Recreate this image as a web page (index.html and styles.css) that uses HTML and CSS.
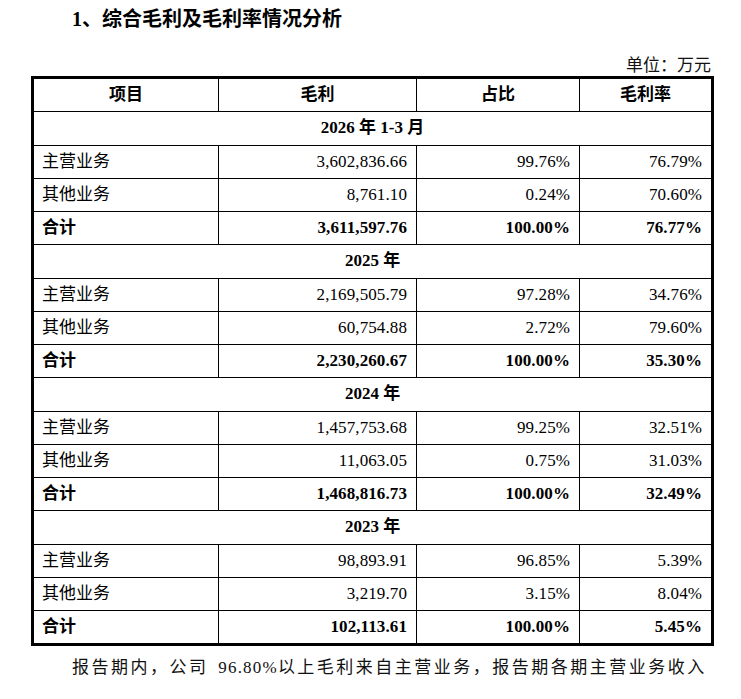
FILE: index.html
```html
<!DOCTYPE html>
<html lang="zh-CN">
<head>
<meta charset="utf-8">
<title>综合毛利及毛利率情况分析</title>
<link rel="stylesheet" href="styles.css">
</head>
<body>
<h2 class="title">1、综合毛利及毛利率情况分析</h2>
<div class="unit">单位：万元</div>
<table class="grid">
  <colgroup>
    <col class="c1"><col class="c2"><col class="c3"><col class="c4">
  </colgroup>
  <thead>
    <tr class="head"><td>项目</td><td>毛利</td><td>占比</td><td class="last">毛利率</td></tr>
  </thead>
  <tbody>
    <tr class="period"><td colspan="4" class="last">2026 年 1-3 月</td></tr>
    <tr><td class="name">主营业务</td><td class="num">3,602,836.66</td><td class="num">99.76%</td><td class="num last">76.79%</td></tr>
    <tr><td class="name">其他业务</td><td class="num">8,761.10</td><td class="num">0.24%</td><td class="num last">70.60%</td></tr>
    <tr class="total"><td class="name">合计</td><td class="num">3,611,597.76</td><td class="num">100.00%</td><td class="num last">76.77%</td></tr>

    <tr class="period"><td colspan="4" class="last">2025 年</td></tr>
    <tr><td class="name">主营业务</td><td class="num">2,169,505.79</td><td class="num">97.28%</td><td class="num last">34.76%</td></tr>
    <tr><td class="name">其他业务</td><td class="num">60,754.88</td><td class="num">2.72%</td><td class="num last">79.60%</td></tr>
    <tr class="total"><td class="name">合计</td><td class="num">2,230,260.67</td><td class="num">100.00%</td><td class="num last">35.30%</td></tr>

    <tr class="period"><td colspan="4" class="last">2024 年</td></tr>
    <tr><td class="name">主营业务</td><td class="num">1,457,753.68</td><td class="num">99.25%</td><td class="num last">32.51%</td></tr>
    <tr><td class="name">其他业务</td><td class="num">11,063.05</td><td class="num">0.75%</td><td class="num last">31.03%</td></tr>
    <tr class="total"><td class="name">合计</td><td class="num">1,468,816.73</td><td class="num">100.00%</td><td class="num last">32.49%</td></tr>

    <tr class="period"><td colspan="4" class="last">2023 年</td></tr>
    <tr><td class="name">主营业务</td><td class="num">98,893.91</td><td class="num">96.85%</td><td class="num last">5.39%</td></tr>
    <tr><td class="name">其他业务</td><td class="num">3,219.70</td><td class="num">3.15%</td><td class="num last">8.04%</td></tr>
    <tr class="total end"><td class="name">合计</td><td class="num">102,113.61</td><td class="num">100.00%</td><td class="num last">5.45%</td></tr>
  </tbody>
</table>
<p class="para">报告期内，公司 <span class="digits">96.80%</span>以上毛利来自主营业务，报告期各期主营业务收入</p>
</body>
</html>
```

FILE: styles.css
```css
html, body {
  margin: 0;
  padding: 0;
  background: #ffffff;
  color: #000000;
}

body {
  width: 741px;
  height: 699px;
  overflow: hidden;
  font-family: "Liberation Serif", "Noto Sans CJK SC", serif;
}

.title {
  margin: 0;
  padding-left: 72px;
  height: 38px;
  line-height: 38px;
  font-size: 20px;
  font-weight: bold;
}

.unit {
  margin-top: 18px;
  height: 20px;
  line-height: 20px;
  font-size: 17px;
  text-align: right;
  padding-right: 30px;
  color: #111;
}

.grid {
  margin-left: 31px;
  width: 683px;
  table-layout: fixed;
  border-collapse: separate;
  border-spacing: 0;
  border: 3px solid #000;
  font-size: 17px;
}

.c1 { width: 185px; }
.c2 { width: 198px; }
.c3 { width: 163px; }
.c4 { width: 131px; }

.grid td {
  height: 32px;
  padding: 0;
  line-height: 20px;
  border-right: 1px solid #000;
  border-bottom: 1px solid #000;
  vertical-align: middle;
  white-space: nowrap;
}

.grid td.last {
  border-right: none;
}

.grid tr.end td {
  border-bottom: none;
}

.head td {
  height: 31.5px;
  text-align: center;
  font-weight: bold;
}

.grid .period td {
  height: 33px;
  text-align: center;
  font-weight: bold;
}

.grid td.name {
  padding-left: 8px;
  text-align: left;
}

.grid td.num {
  padding-right: 9px;
  text-align: right;
  letter-spacing: 0.1px;
}

.total td {
  font-weight: bold;
}

.para {
  margin: 7px 0 0 0;
  padding-left: 72px;
  line-height: 30px;
  font-size: 17px;
  letter-spacing: 2.5px;
  white-space: nowrap;
  overflow: hidden;
  color: #111;
}

.digits {
  margin-left: 3px;
  letter-spacing: 1.2px;
}
```
